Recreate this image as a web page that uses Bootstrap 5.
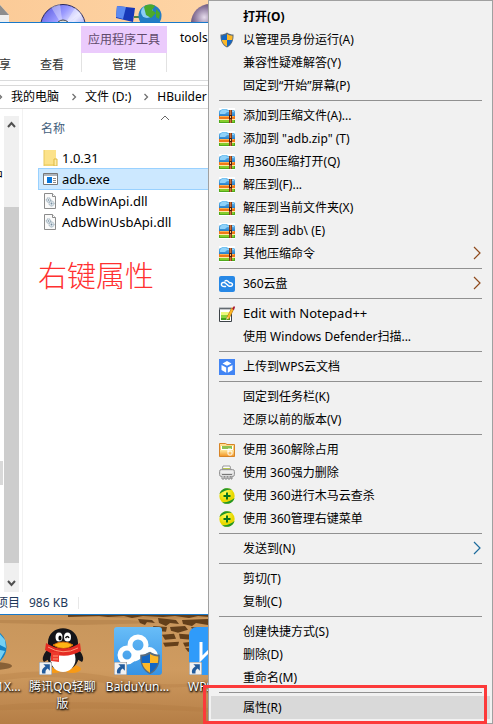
<!DOCTYPE html>
<html lang="zh-CN">
<head>
<meta charset="utf-8">
<meta name="viewport" content="width=device-width, initial-scale=1">
<title>tools</title>
<link href="https://cdn.jsdelivr.net/npm/bootstrap@5.3.0/dist/css/bootstrap.min.css" rel="stylesheet">
<style>
body{font-family:"Noto Sans","Noto Sans CJK SC",sans-serif;font-size:12px;line-height:18px;color:#000;background:#d09a5c}
button,a{color:inherit;text-decoration:none}
button{background:none;border:0;padding:0;font:inherit}
svg{display:block;flex:none}
.desk-top{height:22px;background:linear-gradient(90deg,#fbcb98,#ffd8aa 60%,#f6bf86)}
.desk-top svg{width:210px;height:22px}
.explorer{background:#fff;border-top:1px solid #1979ca;border-bottom:1px solid #1979ca}
.ribbon{height:58px;border-bottom:1px solid #dadbdc}
.tab-plain{align-self:flex-end;height:30px;color:#333}
.tab-share{width:11px;direction:rtl;overflow:hidden;white-space:nowrap}
.tab-view{margin-left:29px;margin-right:17px}
.tool-tab{width:86px;margin-top:3px;height:46px;color:#333;border:1px solid #e2e2e2;border-width:0 1px}
.tool-head{height:27px;margin:0 -1px;background:#ebcbfc;color:#604a6b;line-height:27px}
.tool-tab button{line-height:24px}
.win-title{margin:6px 0 0 13px}
.address{height:24px;margin-top:4px;border-top:1px solid #d9d9d9;border-bottom:1px solid #d9d9d9;line-height:22px;gap:8px}
.address svg{width:6px;height:8px}
.address svg:first-child{margin-left:-3px}
.address a{white-space:nowrap}
.pane-nav{width:4px;overflow:hidden}
.nav-word{width:3px;margin-top:58px;direction:rtl;overflow:hidden}
.nav-item-hover{height:24px;margin-top:276px;background:#d9d9d9;width:3px}
.vscroll{width:15px;margin-top:7px;background:#f0f0f0}
.thumb{background:#cdcdcd;margin-bottom:11px;margin-top:74px}
.files{margin-left:3px;border-left:1px solid #f2f2f2;padding-left:15px;min-width:0}
.col-name{color:#43607c;padding-left:3px;margin-top:11px;margin-bottom:9px}
.sort-row svg{margin-left:60px;margin-top:4px}
.file-row{height:21px;padding-left:4px;font-size:13px;border:1px solid transparent;gap:4px;text-align:left;width:100%}
.file-row svg{width:15px;height:16px}
.file-row.picked{height:22px;background:#cce8ff;border-color:#99d1ff}
.note-red{color:#ff3030;font-family:"Noto Sans CJK SC",sans-serif;font-size:29px;font-weight:300;line-height:44px;margin-top:20px}
.statusbar{height:22px;color:#1e395b;line-height:22px}
.statusbar .rest{width:20px;overflow:hidden;direction:rtl;white-space:nowrap}
.statusbar .size{margin-left:9px;padding-right:10px;border-right:1px solid #e8e8e8;height:12px;line-height:12px}
.desk-bottom{height:109px;position:relative;overflow:hidden}
.desk-bottom .wall{position:absolute;inset:0;width:100%;height:100%}
.shortcuts{position:relative;margin-left:-50px;padding-top:12px}
.shortcut{width:75px;color:#fff;text-align:center;line-height:17px;text-shadow:0 1px 2px #000,1px 1px 2px #000;flex:none}
.shortcut svg{width:48px;height:48px;margin:0 auto 3px}
.ctx.dropdown-menu{top:0;right:0;width:285px;margin:0;padding:4px 2px;background:#f1f1f1;border:1px solid #a0a0a0;border-radius:0;font-size:12px;color:#000;line-height:23px}
.ctx .dropdown-item{height:23px;padding:0 8px;display:flex;align-items:center;gap:8px;line-height:23px;color:#000;font-size:12px}
.ctx .dropdown-item svg{width:16px;height:16px}
.ctx .dropdown-item .no-icon{width:16px;flex:none}
.ctx .dropdown-item svg.more{margin-left:auto;width:9px;height:16px;color:#8f4a1c}
.ctx .dropdown-item svg.send{color:#1c6b9c}
.ctx .dropdown-item.latin{font-size:13px}
.ctx .dropdown-item.on{background:#d9d9d9}
.ctx hr{margin:3px 8px;border:0;height:1px;background:#919191;opacity:1}
.redbox{position:absolute;top:685px;right:6px;width:284px;height:39px;border:3px solid #fc3a3a;z-index:1100;pointer-events:none}
</style>
<script src="https://cdn.jsdelivr.net/npm/bootstrap@5.3.0/dist/js/bootstrap.bundle.min.js"></script>
</head>
<body class="position-relative min-vh-100 d-flex flex-column overflow-hidden">
<svg width="0" height="0" class="position-absolute" aria-hidden="true">
<defs>
<linearGradient id="gBlue" x2="0" y2="1"><stop stop-color="#7cc8f4"/><stop offset="1" stop-color="#1874c4"/></linearGradient>
<linearGradient id="gGold" x2="0" y2="1"><stop stop-color="#ffe79a"/><stop offset="1" stop-color="#f39a2c"/></linearGradient>
<radialGradient id="gBall" cx=".4" cy=".3"><stop stop-color="#fbff52"/><stop offset="1" stop-color="#e8d800"/></radialGradient>
<linearGradient id="gCd" x2="1" y2="1"><stop stop-color="#4a4ad8"/><stop offset=".35" stop-color="#9a9aff"/><stop offset=".55" stop-color="#e8e8ff"/><stop offset="1" stop-color="#4848d0"/></linearGradient>
<linearGradient id="gBd" x2="0" y2="1"><stop stop-color="#68bdf8"/><stop offset="1" stop-color="#3793e4"/></linearGradient>
<radialGradient id="gPurple" cx=".35" cy=".35"><stop stop-color="#e6dcec"/><stop offset=".5" stop-color="#8e7a9e"/><stop offset="1" stop-color="#3e2c50"/></radialGradient>
</defs>
<symbol id="shield" viewBox="0 0 16 16"><path d="M8 .5c2 1.400 4.200 2 6.500 2 .3 6-1.500 10.500-6.500 13-5-2.500-6.800-7-6.500-13 2.300 0 4.500-.6 6.500-2z" fill="#5b6c7c"/><path d="M8 2v6H2.800c-.3-1.400-.4-2.700-.3-4.300C4.500 3.600 6.400 3 8 2zM8 8h5.200c-.7 2.800-2.300 4.900-5.200 6.500z" fill="#1467c4"/><path d="M8 2c1.600 1 3.500 1.600 5.500 1.700.1 1.600 0 2.900-.3 4.300H8zM2.800 8H8v6.500C5.100 12.900 3.500 10.800 2.800 8z" fill="#fdb827"/></symbol>
<symbol id="zip" viewBox="0 0 16 16"><path fill="#fff" d="M0 0h16v16H0z"/><path d="M0 3l1-1h1l1-1h5l1 1h6l1 1v6H0z" fill="url(#gBlue)"/><path d="M1 4l2-2h4l1 1h7v1H8L6 6H1z" fill="#8fd2fa"/><path d="M0 8h16v3H0z" fill="#f07818"/><path d="M1 8h14v1H1z" fill="#ffb050"/><path d="M0 11h16v4H0z" fill="#4faa1c"/><path d="M0 11h16v1H0z" fill="#ffe8a8"/><path d="M1 12h14v2H1z" fill="#86cc2c"/><path d="M10 2h3v13h-3z" fill="#8a3b18"/><path d="M11 2h1v13h-1z" fill="#c8733c"/><path d="M10 7h3v4h-3z" fill="#4a1c10"/><path d="M11 8h1v2h-1z" fill="#ffc070"/></symbol>
<symbol id="cloud360" viewBox="0 0 16 16"><rect width="16" height="16" rx="2" fill="#2788e6"/><path d="M6.500 10.500C3.500 11 2 9.500 2.500 7.800 3 6.400 5 6 6.300 7l3 2.600c1.500 1.200 4 1 4.200-.9.100-1.500-1.500-2.300-3-1.800C9.500 5 7.500 4 6 5" fill="none" stroke="#fff" stroke-width="1.500" stroke-linecap="round"/></symbol>
<symbol id="notepad" viewBox="0 0 16 16"><path fill="#fff" stroke="#3d4348" d="M.5 2.500h12v13H.5z"/><path fill="#eef87a" d="M2 6h9v4H2z"/><path fill="#8cd43c" d="M2 9h9v3H2z"/><path fill="#43a01c" d="M2 12h9v2H2z"/><path d="M1 1v3m2-3v3m2-3v3m2-3v3m2-3v3m2-3v3" stroke="#8b9298" stroke-width="1"/><path d="M14 2L8.500 13" stroke="#b0761c" stroke-width="3"/><path d="M14 2L9 12" stroke="#ffb726" stroke-width="2"/><path d="M13 3l2-3 1 1-1 3z" fill="#a51532"/><path d="M7 14l1-3 2 1z" fill="#f6d7a0"/></symbol>
<symbol id="wps" viewBox="0 0 16 16"><path fill="#4285f4" d="M0 0h16v16H0z"/><path fill="#fff" d="M8 2l4.500 2.400L8 6.800 3.500 4.400zM2.500 6l4.700 2.500v5.200L2.500 11zM13.500 6L8.800 8.500v5.200l4.700-2.700z"/></symbol>
<symbol id="fold360" viewBox="0 0 16 16"><path d="M.5 1.500h6l1.500 1h7.500v12H.5z" fill="url(#gGold)" stroke="#d78427"/><path d="M2 4h12v4H2z" fill="#fff"/><path d="M3 4h10v3H3z" fill="#8cc152"/><path d="M1 8h14v6H1z" fill="url(#gGold)"/><rect x="9" y="9" width="4" height="4" rx="1" fill="none" stroke="#fff"/><path d="M9 10V7h3" fill="none" stroke="#fff"/></symbol>
<symbol id="shred" viewBox="0 0 16 16"><path d="M4 1h7l1 4H3z" fill="#fff" stroke="#999"/><path d="M4 3h7v2H4z" fill="#b9c94f"/><rect x=".5" y="4.500" width="15" height="7" rx="2" fill="#dcdcdc" stroke="#979797"/><path d="M2 7h12" stroke="#fff"/><path d="M3 9.500h10" stroke="#777"/><path d="M3 11v3h2v-3m1 0v3h2v-3m1 0v3h2v-3m1 0v3h1v-3" stroke="#888" fill="#eee"/></symbol>
<symbol id="ball" viewBox="0 0 16 16"><circle cx="8" cy="8" r="7.700" fill="url(#gBall)"/><path d="M.5 6C1.500 2 5 0 8.500.2c2 0 4 1 4.500 1.800C8.500 1.200 4.500 3 .5 6zM15.500 10c-1 4-4.500 6-8 5.800-2 0-4-1-4.500-1.800 4.500.8 8.500-1 12.500-4z" fill="#229628"/><path d="M8 4.500v7M4.500 8h7" stroke="#08751d" stroke-width="2"/></symbol>
<symbol id="more" viewBox="0 0 9 16"><path d="M1 1l6 6-6 6" fill="none" stroke="currentColor" stroke-width="1.200"/></symbol>
<symbol id="dll" viewBox="0 0 15 16"><path d="M1.500.5h8l3 3v12h-11z" fill="#fafafa" stroke="#8b8b8b"/><path d="M9.500.5v3h3" fill="#fff" stroke="#8b8b8b"/><g fill="#e4ebf0" stroke="#8299a8"><circle cx="5.500" cy="7" r="2.200" stroke-dasharray="1 .6"/><circle cx="8.500" cy="10.500" r="2.500" stroke-dasharray="1 .6"/></g><circle cx="5.500" cy="7" r=".8" fill="#738a9b"/><circle cx="8.500" cy="10.500" r=".9" fill="#738a9b"/></symbol>
<symbol id="arrow" viewBox="0 0 12 12"><path d="M0 0h12v12H0z" fill="#f2f2f2" stroke="#8b8b8b"/><path d="M4 2h6v6L8 6c-2 1-2 2.500-2 4.500H3C2 8 3.500 5.500 6 4z" fill="#225b9c"/></symbol>
<symbol id="crumb" viewBox="0 0 6 8"><path d="M1.500 1l3 3-3 3" fill="none" stroke="#707070" stroke-width="1.300"/></symbol>
</svg>

<div class="desk-top">
<svg viewBox="0 0 210 22" aria-hidden="true">
<path d="M0 5l9 10v7H0z" fill="#eee"/><path d="M0 5l9 10H0z" fill="#8d8d8d"/>
<circle cx="63" cy="27" r="22.500" fill="url(#gCd)" stroke="#28285c"/><path d="M63 27L51 7l9-3zM63 27L75 8l6 5z" fill="#fff" opacity=".35"/><circle cx="63" cy="27" r="7" fill="#ddd" stroke="#444"/>
<path d="M117 6l18 2-2 14-17-4z" fill="#1738b8"/><path d="M117 6l9 1-3 12-7-2z" fill="#5b8af0"/><path d="M134 17h8" stroke="#56853f" stroke-width="2"/>
<circle cx="150" cy="16" r="11.500" fill="#237cc4"/><circle cx="147" cy="12" r="6" fill="#8acdf4"/><path d="M144 7c3-3 8-3 11-1l-3 4 4 3-5 5-5-3-1-4zM156 9l4 4-1 6-3-2z" fill="#4ba92c"/>
<circle cx="210" cy="23" r="19" fill="url(#gPurple)"/>
</svg>
</div>

<main class="explorer flex-grow-1 d-flex flex-column">
<div class="ribbon d-flex align-items-start">
<button class="tab-plain tab-share" type="button">共享</button>
<button class="tab-plain tab-view" type="button">查看</button>
<div class="tool-tab text-center d-flex flex-column">
<div class="tool-head">应用程序工具</div>
<button type="button">管理</button>
</div>
<div class="win-title">tools</div>
</div>
<nav class="address d-flex align-items-center" aria-label="路径">
<svg><use href="#crumb"/></svg>
<a href="#">我的电脑</a>
<svg class="ms-1"><use href="#crumb"/></svg>
<a href="#">文件 (D:)</a>
<svg class="ms-1"><use href="#crumb"/></svg>
<a href="#">HBuilder</a>
</nav>
<div class="d-flex flex-grow-1">
<div class="pane-nav"><div class="nav-word">中</div><div class="nav-item-hover"></div></div>
<div class="vscroll d-flex flex-column">
<button type="button" aria-label="向上滚动"><svg width="15" height="17" viewBox="0 0 15 17"><path d="M4 11l3.500-4 3.500 4" fill="none" stroke="#505050" stroke-width="2"/></svg></button>
<div class="thumb flex-grow-1"></div>
<button type="button" aria-label="向下滚动"><svg width="15" height="18" viewBox="0 0 15 18"><path d="M4 7l3.500 4L11 7" fill="none" stroke="#505050" stroke-width="2"/></svg></button>
</div>
<div class="files flex-grow-1">
<div class="d-flex sort-row">
<button type="button" class="col-name">名称</button>
<svg width="110" height="8" viewBox="0 0 110 8"><path d="M36 7l4-4 4 4" fill="none" stroke="#666"/></svg>
</div>
<button type="button" class="file-row d-flex align-items-center"><svg viewBox="0 0 15 16"><path d="M1 0h12v16H1z" fill="#fce28a"/><path d="M1 15h12M1 0v16" stroke="#e8c85b"/><path d="M11 9h3v7h-3z" fill="#ffedaa" stroke="#dfb943"/></svg>1.0.31</button>
<button type="button" class="file-row picked d-flex align-items-center"><svg viewBox="0 0 15 16"><path d="M.5 2.500h14v11H.5z" fill="#fff" stroke="#777"/><path d="M1 3h13v2H1z" fill="#adb5bd"/><path d="M4 6h5v6H4z" fill="#0877dc"/><path d="M10 7.500h3m-3 2h3m-3 2h3" stroke="#8c8c8c"/></svg>adb.exe</button>
<button type="button" class="file-row d-flex align-items-center"><svg><use href="#dll"/></svg>AdbWinApi.dll</button>
<button type="button" class="file-row d-flex align-items-center"><svg><use href="#dll"/></svg>AdbWinUsbApi.dll</button>
<div class="note-red">右键属性</div>
</div>
</div>
<div class="statusbar d-flex align-items-center"><span class="rest">个项目</span><span class="size">986 KB</span></div>
</main>

<section class="desk-bottom" aria-label="桌面">
<svg class="wall" viewBox="0 0 493 110" preserveAspectRatio="none" aria-hidden="true">
<defs><linearGradient id="sand" x2="0" y2="1"><stop stop-color="#c8965c"/><stop offset=".5" stop-color="#cf9b60"/><stop offset="1" stop-color="#b57e46"/></linearGradient></defs>
<path fill="url(#sand)" d="M0 0h493v110H0z"/>
<path d="M60 0h150v2l-40 2-50-1zM0 5h130l30 3-80 2L0 8z" fill="#a87540" opacity=".4"/>
<g fill="#52300f" opacity=".85"><path d="M68 0h142v2l-12-1-9 2-14-2-12 1-20-1-11 2-8-2-16 1-9-1-31 1zM138 4l14 1 3 3-8-1-2 3-5-2zM158 3l18 2 3 4-9-1-4 3-7-3zM182 5l26-1v6l-12-2-4 3-9-2z"/><path d="M135 12l13 1 2 2-13 1zM153 11l14 1-1 5-11-1zM170 12l15-1 3 4-10 3-7-2zM191 12l17 1v4l-14 1zM162 20l12-1 2 5-11 1zM179 19l13 1-1 5-11-1zM195 20l13-2v7l-11-1zM163 28l16-1-1 4-13 1zM183 28l9-1 2 4-9 1zM196 28l12-1v6l-10-1zM185 33l9 1 14 1v3l-20-1z"/></g>
<path d="M0 60q60-8 120 4t90 0v6q-60 8-110-2T0 66zM0 91q80-7 210 3v4Q100 92 0 96z" fill="#aa743c" opacity=".25"/>
</svg>
<div class="shortcuts d-flex">
<a href="#" class="shortcut"><svg viewBox="0 0 48 48"><ellipse cx="30" cy="39" rx="18" ry="4" fill="#5a3a1b" opacity=".6"/><circle cx="24" cy="20" r="18.500" fill="#1281c6"/><path d="M27 3l8 3 6 7 1 8-8-4zM30 22l11 2-5 9-8 3z" fill="#74d0f4"/><path d="M30 4q8 16-2 34" fill="none" stroke="#fff" stroke-width="2"/></svg><span class="text-nowrap">HTML 01X...</span></a>
<a href="#" class="shortcut"><svg viewBox="0 0 48 48"><g transform="translate(0 -1)"><ellipse cx="15" cy="43" rx="9" ry="4" fill="#f79a16"/><ellipse cx="33" cy="43" rx="9" ry="4" fill="#f79a16"/><path d="M9 23C5 27 2 33 5 36l7-4zM39 23c4 4 7 10 4 13l-7-4z" fill="#17171b"/><ellipse cx="24" cy="29" rx="16" ry="16" fill="#17171b"/><ellipse cx="24" cy="33" rx="12.500" ry="13" fill="#fff"/><path d="M9 18C8-3 40-3 39 18q0 6-3 7H12q-3-1-3-7z" fill="#141418"/><ellipse cx="20" cy="11" rx="3.500" ry="4.500" fill="#fff"/><ellipse cx="28.500" cy="11" rx="3.500" ry="4.500" fill="#fff"/><ellipse cx="21" cy="12" rx="1.600" ry="2.500"/><path d="M26.500 12q2-3 3.500 0" fill="none" stroke="#111" stroke-width="1.500"/><path d="M14 19q10-6 20 0-9 7-20 0z" fill="#ffb515" stroke="#d86d08"/><path d="M7 17q17 11 34 0l1 8q-18 10-36-1z" fill="#e52b22"/><path d="M12 26h8v10l-8-1z" fill="#ed3a2d"/><path d="M9 21q15 9 30 1M14 30h5M14 33h5" stroke="#ff9a7a" fill="none"/></g><use href="#arrow" x="0" y="35" width="13" height="13"/></svg>腾讯QQ轻聊版</a>
<a href="#" class="shortcut"><svg viewBox="0 0 48 48"><rect width="48" height="48" rx="3" fill="url(#gBd)"/><g fill="none" stroke="#fff" stroke-width="5"><circle cx="24" cy="18" r="8"/><circle cx="13" cy="28" r="7"/><path d="M18 32q6 0 12-7c7-6 13 1 11 8"/></g><use href="#shield" x="24" y="24" width="24" height="24"/><use href="#arrow" x="0" y="35" width="13" height="13"/></svg><span class="text-nowrap">BaiduYun...</span></a>
<a href="#" class="shortcut"><svg viewBox="0 0 48 48"><rect width="48" height="48" rx="8" fill="#2f9bfa"/><path d="M12 15v17l11-11 2 10 11-17" fill="none" stroke="#fff" stroke-width="3"/><use href="#arrow" x="0" y="35" width="13" height="13"/></svg><span class="text-nowrap">WPS文字</span></a>
</div>
</section>

<div class="dropdown-menu show ctx">
<button type="button" class="dropdown-item fw-bold"><span class="no-icon"></span>打开(O)</button>
<button type="button" class="dropdown-item"><svg><use href="#shield"/></svg>以管理员身份运行(A)</button>
<button type="button" class="dropdown-item"><span class="no-icon"></span>兼容性疑难解答(Y)</button>
<button type="button" class="dropdown-item"><span class="no-icon"></span>固定到“开始”屏幕(P)</button>
<hr>
<button type="button" class="dropdown-item"><svg><use href="#zip"/></svg>添加到压缩文件(A)...</button>
<button type="button" class="dropdown-item"><svg><use href="#zip"/></svg>添加到 "adb.zip" (T)</button>
<button type="button" class="dropdown-item"><svg><use href="#zip"/></svg>用360压缩打开(Q)</button>
<button type="button" class="dropdown-item"><svg><use href="#zip"/></svg>解压到(F)...</button>
<button type="button" class="dropdown-item"><svg><use href="#zip"/></svg>解压到当前文件夹(X)</button>
<button type="button" class="dropdown-item"><svg><use href="#zip"/></svg>解压到 adb\ (E)</button>
<button type="button" class="dropdown-item"><svg><use href="#zip"/></svg>其他压缩命令<svg class="more"><use href="#more"/></svg></button>
<hr>
<button type="button" class="dropdown-item"><svg><use href="#cloud360"/></svg>360云盘<svg class="more"><use href="#more"/></svg></button>
<hr>
<button type="button" class="dropdown-item latin"><svg><use href="#notepad"/></svg>Edit with Notepad++</button>
<button type="button" class="dropdown-item"><span class="no-icon"></span>使用 Windows Defender扫描...</button>
<hr>
<button type="button" class="dropdown-item"><svg><use href="#wps"/></svg>上传到WPS云文档</button>
<hr>
<button type="button" class="dropdown-item"><span class="no-icon"></span>固定到任务栏(K)</button>
<button type="button" class="dropdown-item"><span class="no-icon"></span>还原以前的版本(V)</button>
<hr>
<button type="button" class="dropdown-item"><svg><use href="#fold360"/></svg>使用 360解除占用</button>
<button type="button" class="dropdown-item"><svg><use href="#shred"/></svg>使用 360强力删除</button>
<button type="button" class="dropdown-item"><svg><use href="#ball"/></svg>使用 360进行木马云查杀</button>
<button type="button" class="dropdown-item"><svg><use href="#ball"/></svg>使用 360管理右键菜单</button>
<hr>
<button type="button" class="dropdown-item"><span class="no-icon"></span>发送到(N)<svg class="more send"><use href="#more"/></svg></button>
<hr>
<button type="button" class="dropdown-item"><span class="no-icon"></span>剪切(T)</button>
<button type="button" class="dropdown-item"><span class="no-icon"></span>复制(C)</button>
<hr>
<button type="button" class="dropdown-item"><span class="no-icon"></span>创建快捷方式(S)</button>
<button type="button" class="dropdown-item"><span class="no-icon"></span>删除(D)</button>
<button type="button" class="dropdown-item"><span class="no-icon"></span>重命名(M)</button>
<hr>
<button type="button" class="dropdown-item on"><span class="no-icon"></span>属性(R)</button>
</div>
<div class="redbox"></div>
</body>
</html>
